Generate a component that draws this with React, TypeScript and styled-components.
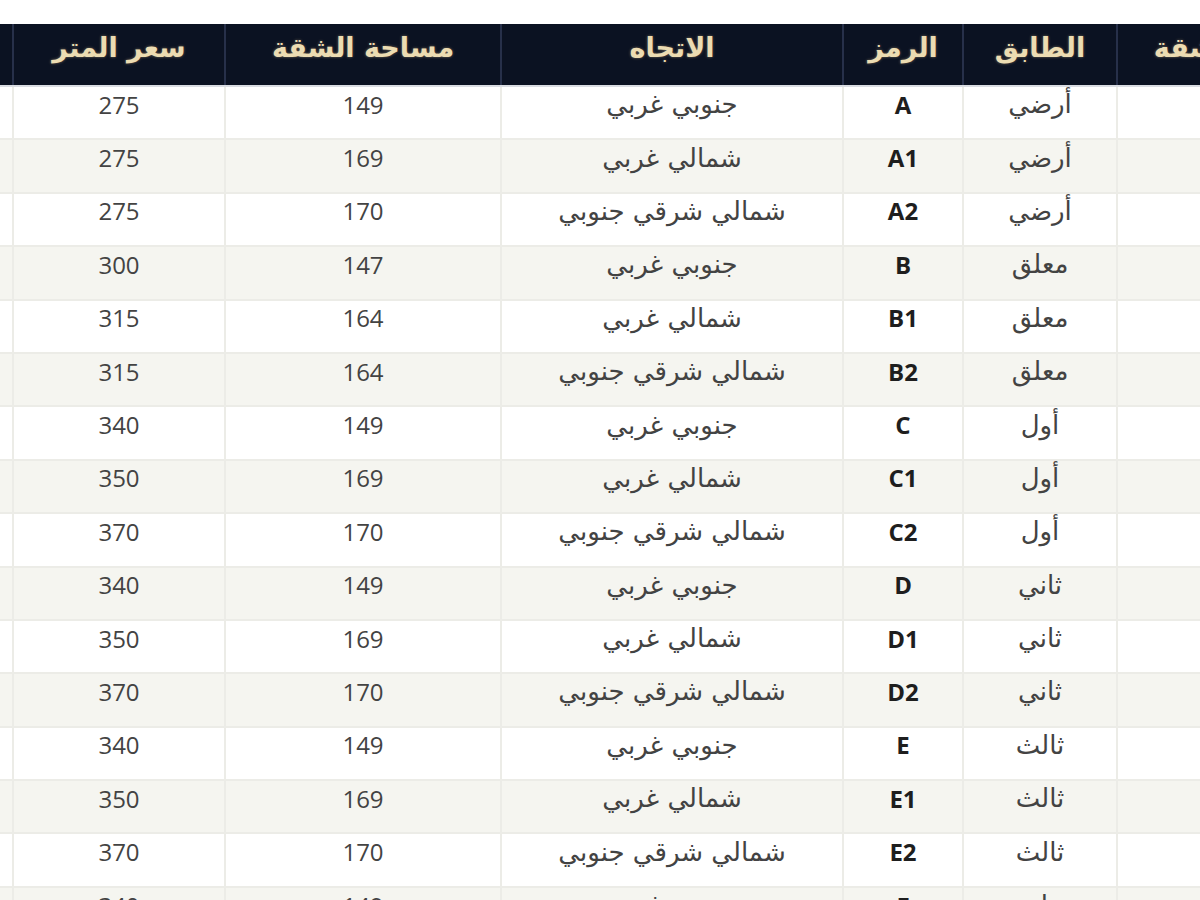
import React from "react";
import styled, { createGlobalStyle } from "styled-components";

const Global = createGlobalStyle`
  html, body { margin: 0; padding: 0; background: #ffffff; }
  body { font-family: "Open Sans", "DejaVu Sans", sans-serif; }
`;

const COLS = "220px 154px 120px 342px 276px 212px 200px";

const Viewport = styled.div`
  width: 1200px;
  height: 900px;
  overflow: hidden;
  background: #ffffff;
  padding-top: 24px;
  box-sizing: border-box;
`;

const Table = styled.div`
  direction: rtl;
  width: 1524px;
  margin-right: -136px;
  margin-left: -188px;
`;

const HeadRow = styled.div`
  display: grid;
  grid-template-columns: ${COLS};
  height: 63px;
  background: #0b1222;
  border-bottom: 2px solid #d9dce2;
  box-sizing: border-box;
`;

const HeadCell = styled.div`
  display: flex;
  align-items: center;
  justify-content: center;
  border-left: 2px solid #27304a;
  color: #ecdcb2;
  font-family: "DejaVu Sans", "Open Sans", sans-serif;
  font-weight: 700;
  font-size: 27px;
  white-space: nowrap;
  text-shadow: 0 0 3px rgba(240, 210, 150, 0.45);
  padding-bottom: 14px;
`;

const Row = styled.div<{ $alt: boolean }>`
  display: grid;
  grid-template-columns: ${COLS};
  height: 53.4px;
  background: ${(p) => (p.$alt ? "#f5f5f0" : "#ffffff")};
  border-bottom: 2px solid #ececE7;
  box-sizing: border-box;
`;

const Cell = styled.div<{ $bold?: boolean; $latin?: boolean }>`
  display: flex;
  align-items: center;
  justify-content: center;
  border-left: 2px solid #ececE7;
  color: ${(p) => (p.$bold ? "#1e1e1e" : "#434343")};
  font-family: ${(p) =>
    p.$latin ? `"Open Sans", "DejaVu Sans", sans-serif` : `"DejaVu Sans", "Open Sans", sans-serif`};
  font-weight: ${(p) => (p.$bold ? 700 : 400)};
  font-size: ${(p) => (p.$latin ? "24px" : "26px")};
  white-space: nowrap;
  padding-bottom: 17px;
`;

type Unit = { floor: string; code: string; dir: string; area: number; price: number };

const SW = "جنوبي غربي";
const NW = "شمالي غربي";
const NES = "شمالي شرقي جنوبي";

const units: Unit[] = [
  { floor: "أرضي", code: "A", dir: SW, area: 149, price: 275 },
  { floor: "أرضي", code: "A1", dir: NW, area: 169, price: 275 },
  { floor: "أرضي", code: "A2", dir: NES, area: 170, price: 275 },
  { floor: "معلق", code: "B", dir: SW, area: 147, price: 300 },
  { floor: "معلق", code: "B1", dir: NW, area: 164, price: 315 },
  { floor: "معلق", code: "B2", dir: NES, area: 164, price: 315 },
  { floor: "أول", code: "C", dir: SW, area: 149, price: 340 },
  { floor: "أول", code: "C1", dir: NW, area: 169, price: 350 },
  { floor: "أول", code: "C2", dir: NES, area: 170, price: 370 },
  { floor: "ثاني", code: "D", dir: SW, area: 149, price: 340 },
  { floor: "ثاني", code: "D1", dir: NW, area: 169, price: 350 },
  { floor: "ثاني", code: "D2", dir: NES, area: 170, price: 370 },
  { floor: "ثالث", code: "E", dir: SW, area: 149, price: 340 },
  { floor: "ثالث", code: "E1", dir: NW, area: 169, price: 350 },
  { floor: "ثالث", code: "E2", dir: NES, area: 170, price: 370 },
  { floor: "رابع", code: "F", dir: SW, area: 149, price: 340 },
];

export default function App() {
  return (
    <>
      <Global />
      <Viewport>
        <Table>
          <HeadRow>
            <HeadCell>رقم الشقة</HeadCell>
            <HeadCell>الطابق</HeadCell>
            <HeadCell>الرمز</HeadCell>
            <HeadCell>الاتجاه</HeadCell>
            <HeadCell>مساحة الشقة</HeadCell>
            <HeadCell>سعر المتر</HeadCell>
            <HeadCell>السعر</HeadCell>
          </HeadRow>
          {units.map((u, i) => (
            <Row key={u.code} $alt={i % 2 === 1}>
              <Cell />
              <Cell>{u.floor}</Cell>
              <Cell $bold $latin>
                {u.code}
              </Cell>
              <Cell>{u.dir}</Cell>
              <Cell $latin>{u.area}</Cell>
              <Cell $latin>{u.price}</Cell>
              <Cell />
            </Row>
          ))}
        </Table>
      </Viewport>
    </>
  );
}
